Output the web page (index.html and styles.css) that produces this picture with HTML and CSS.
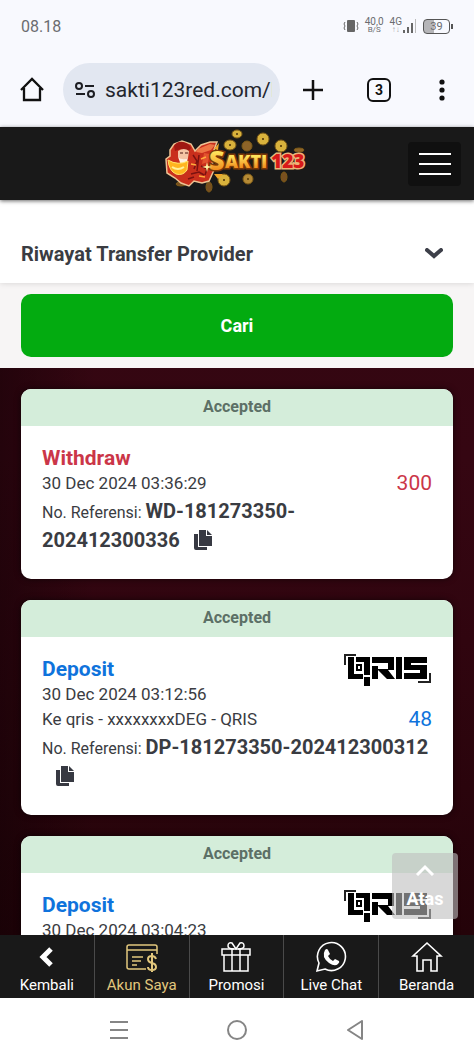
FILE: index.html
```html
<!DOCTYPE html>
<html lang="id">

<head>
  <meta charset="UTF-8">
  <meta name="viewport" content="width=device-width, initial-scale=1.0">
  <title>Riwayat Transfer Provider</title>
  <link rel="stylesheet" href="styles.css">
</head>

<body>
  <svg class="sprite" aria-hidden="true">
    <symbol id="copy" viewBox="0 0 18 20">
      <path d="M5 0h7v6h6v10H5z" />
      <path d="M13 0l5 5h-5z" />
      <path d="M0 4h4v13h9v3H2q-2 0-2-2z" />
    </symbol>
    <symbol id="qris" viewBox="0 0 88 34">
      <path d="M1 12V2h11M86 20v9H74" fill="none" stroke="#222" stroke-width="2" />
      <path d="M4 4h6v17h9v5H4zM12 4h14v18h-6V9h-8zM20 24h6v9h-6zM12 11h6v7h-6zM14 13v3h2v-3z" fill-rule="evenodd" />
      <path d="M28 4h22v13h-6l7 9h-8l-10-10h11V10H28zM28 13h6v13h-6zM52 4h6v22h-6zM60 4h23v6H67v2h16v14H60v-6h16v-3H60z" />
    </symbol>
  </svg>

  <header class="browser">
    <div class="status">
      <span class="clock">08.18</span>
      <div class="status-icons">
        <svg width="16" height="14" viewBox="0 0 16 14">
          <rect x="4" y="1" width="8" height="12" rx="1" fill="#666" />
          <path d="M2 3l-1 2 1 2-1 2 1 2M14 3l1 2-1 2 1 2-1 2" fill="none" stroke="#666" />
        </svg>
        <span class="speed">40,0<small>B/S</small></span>
        <span class="network">4G<small>↑↓</small></span>
        <svg class="signal" width="15" height="14" viewBox="0 0 15 14" fill="#666">
          <path d="M1 11h2v3H1zM5 8h2v6H5zM9 4h2v10H9z" />
          <path d="M13 0h1v14h-1z" fill="#bbb" />
        </svg>
        <span class="battery">39</span>
      </div>
    </div>
    <div class="toolbar">
      <button class="tool home" aria-label="Home">
        <svg width="26" height="26" viewBox="0 0 26 26" fill="none" stroke="#111" stroke-width="2.300">
          <path d="M2 13L13 2l11 11M5 11v12h16V11" />
        </svg>
      </button>
      <div class="address">
        <svg width="22" height="18" viewBox="0 0 22 18" fill="none" stroke="#1c1d22" stroke-width="2">
          <circle cx="5" cy="5" r="3" />
          <circle cx="17" cy="13" r="3" />
          <path d="M11 5h9M2 13h9" />
        </svg>
        <input type="text" value="sakti123red.com/l" aria-label="Address">
      </div>
      <button class="tool" aria-label="New tab">
        <svg width="22" height="22" viewBox="0 0 22 22" stroke="#111" stroke-width="2.500">
          <path d="M11 1v20M1 11h20" />
        </svg>
      </button>
      <button class="tool"><span class="tabs">3</span></button>
      <button class="tool more" aria-label="Menu">
        <svg width="6" height="22" viewBox="0 0 6 22" fill="#111">
          <circle cx="3" cy="3" r="2.600" />
          <circle cx="3" cy="11" r="2.600" />
          <circle cx="3" cy="19" r="2.600" />
        </svg>
      </button>
    </div>
  </header>

  <nav class="navbar">
    <a href="#" class="brand" aria-label="Sakti123">
      <svg width="142" height="64" viewBox="0 4 142 64">
        <defs>
          <linearGradient id="gold" x1="0" y1="0" x2="0" y2="1">
            <stop offset=".3" stop-color="#ffe45c" />
            <stop offset=".8" stop-color="#f08a1c" />
          </linearGradient>
        </defs>
        <g fill="#d9b23c" stroke="#7c5a17">
          <ellipse cx="71" cy="6" rx="5" ry="4" />
          <ellipse cx="97" cy="11" rx="6" ry="6" />
          <ellipse cx="64" cy="17" rx="6" ry="5" />
          <ellipse cx="81" cy="18" rx="5" ry="5" fill="#8e6428" />
          <ellipse cx="115" cy="18" rx="6" ry="6" />
          <ellipse cx="133" cy="22" rx="5" ry="2" fill="#8e6428" />
          <ellipse cx="58" cy="52" rx="6" ry="6" />
          <ellipse cx="82" cy="51" rx="5" ry="5" fill="#b58a35" />
          <ellipse cx="118" cy="49" rx="3" ry="5" fill="#795020" />
          <ellipse cx="15" cy="56" rx="5" ry="2" fill="#795020" />
          <ellipse cx="43" cy="59" rx="3" ry="5" fill="#795020" />
        </g>
        <path d="M70 5h2v2h-2zM96 10h2v2h-2zM63 16h2v2h-2zM114 17h2v2h-2zM57 51h2v2h-2zM81 50h2v2h-2z" fill="#6d4f13" />
        <path d="M4 22l4-6 8-3 9 3 4 7 6-6 9-3h7l-3 8 3 6-5 5 2 9-5 11-7 2-8-2-5 5-8-3-6-5-8-5-1-14 4-3z" fill="#c92f1c" stroke="#edc393" stroke-width="1.500" />
        <path d="M8 18q3-5 9-4 6 1 8 6l-3 4-7-3-6 2z" fill="#a01812" />
        <path d="M12 23q6-4 11 0l-1 7-5 3-5-4z" fill="#f5c5a4" />
        <path d="M12 29q5 4 10 1l-2 6-5 1z" fill="#fff0e0" />
        <path d="M14 25h3M19 25h3" stroke="#4a1712" />
        <path d="M32 21l12-5 5 1-4 5-9 3-6-1z" fill="#ee7544" />
        <path d="M38 25l6 1-2 8-6 2z" fill="#e3532f" />
        <path d="M2 32q10 6 20 1l-1 9q-4 6-11 4Q3 43 2 32z" fill="#ffb51f" stroke="#ffe36a" />
        <path d="M6 39q6 4 12 0" stroke="#fff19a" fill="none" stroke-width="2" />
        <path d="M27 27l4 6-3 8M33 27l-2 16M25 46l8-2 5 3M35 38l6 3-2 6M22 51l6-2" fill="none" stroke="#7a1210" stroke-width="1.500" />
        <path d="M25 36l5 1M33 48l6 1M35 31l5-2" stroke="#ffab3c" stroke-width="1.500" />
        <g class="brand-text">
          <text x="43" y="42" fill="url(#gold)" stroke="#7a3808" font-size="27">S</text>
          <text x="59" y="40" fill="url(#gold)" stroke="#7a3808" font-size="18">AKTI</text>
          <text x="105" y="40" fill="#d81919" stroke="#edb477" font-size="19">123</text>
        </g>
        <path d="M48 21l5-6-1 7zM48 46l4 5 5-5z" fill="#efa529" />
        <path d="M42 38l-1-4-1 4-4 1 4 1 1 4 1-4 4-1z" fill="#fff2a0" />
      </svg>
    </a>
    <button class="hamburger" aria-label="Menu"><span></span><span></span><span></span></button>
  </nav>

  <main class="content">
    <button class="filter-title">
      Riwayat Transfer Provider
      <svg width="18" height="12" viewBox="0 0 18 12" fill="none" stroke="#3d3f49" stroke-width="4">
        <path d="M2 2l7 6 7-6" stroke-linecap="round" />
      </svg>
    </button>
    <div class="filter-action">
      <button class="search">Cari</button>
    </div>

    <section class="history">
      <article class="card">
        <h2 class="card-status">Accepted</h2>
        <div class="card-body">
          <div class="summary">
            <div>
              <h3 class="withdraw">Withdraw</h3>
              <p>30 Dec 2024 03:36:29</p>
            </div>
            <div class="side">
              <span class="amount withdraw">300</span>
            </div>
          </div>
          <p class="reference">No. Referensi: <strong>WD-181273350-202412300336</strong><button class="copy" aria-label="Salin"><svg width="18" height="20"><use href="#copy" /></svg></button></p>
        </div>
      </article>

      <article class="card">
        <h2 class="card-status">Accepted</h2>
        <div class="card-body">
          <div class="summary">
            <div>
              <h3 class="deposit">Deposit</h3>
              <p>30 Dec 2024 03:12:56</p>
              <p>Ke qris - xxxxxxxxDEG - QRIS</p>
            </div>
            <div class="side">
              <svg class="qris" width="88" height="34" role="img" aria-label="QRIS"><use href="#qris" /></svg>
              <span class="amount deposit">48</span>
            </div>
          </div>
          <p class="reference">No. Referensi: <strong>DP-181273350-202412300312</strong><button class="copy" aria-label="Salin"><svg width="18" height="20"><use href="#copy" /></svg></button></p>
        </div>
      </article>

      <article class="card">
        <h2 class="card-status">Accepted</h2>
        <div class="card-body">
          <div class="summary">
            <div>
              <h3 class="deposit">Deposit</h3>
              <p>30 Dec 2024 03:04:23</p>
            </div>
            <div class="side">
              <svg class="qris" width="88" height="34" role="img" aria-label="QRIS"><use href="#qris" /></svg>
            </div>
          </div>
        </div>
      </article>
    </section>

    <button class="to-top">
      <svg width="20" height="12" viewBox="0 0 20 12" fill="none" stroke="#fff" stroke-width="3">
        <path d="M2 11l8-8 8 8" />
      </svg>
      Atas
    </button>
  </main>

  <nav class="bottom-nav">
    <a href="#">
      <svg width="32" height="32" viewBox="0 0 32 32" fill="none" stroke="#fff" stroke-width="5">
        <path d="M20 8l-8 8 8 8" />
      </svg>
      Kembali
    </a>
    <a href="#" class="active">
      <svg width="32" height="32" viewBox="0 0 32 32" fill="none" stroke="#e2c77d" stroke-width="1.500">
        <path d="M20 28H3q-2 0-2-2V6q0-2 2-2h26q2 0 2 2v7M1 9h30M6 16h11M6 20h9M6 24h5" />
        <path d="M30 18q-1-3-4-3-4 0-4 3t4 4q4 1 4 4t-4 3-4-3M26 12v19" stroke-width="2" />
      </svg>
      Akun Saya
    </a>
    <a href="#">
      <svg width="32" height="32" viewBox="0 0 32 32" fill="none" stroke="#fff" stroke-width="1.500">
        <path d="M2 8h28v6H2zM4 14v16h24V14M12 8v22M20 8v22" />
        <path d="M14 8Q8 8 8 5q0-4 4-3l4 6 4-6q4-1 4 3 0 3-6 3" />
      </svg>
      Promosi
    </a>
    <a href="#">
      <svg width="32" height="32" viewBox="0 0 32 32">
        <path d="M2 30l2-8A14 14 0 1 1 10 28z" fill="none" stroke="#fff" stroke-width="1.600" />
        <path d="M10 9q2-2 3 0l2 4-2 2q2 4 5 5l2-2 4 2q1 1-1 3-3 3-9-1-8-6-4-13z" fill="#fff" />
      </svg>
      Live Chat
    </a>
    <a href="#">
      <svg width="32" height="32" viewBox="0 0 32 32" fill="none" stroke="#fff" stroke-width="1.600">
        <path d="M6 15H2L16 2l14 13h-4v15h-6V19h-8v11H6z" />
      </svg>
      Beranda
    </a>
  </nav>

  <footer class="system-nav">
    <button aria-label="Recent">
      <svg width="20" height="20" viewBox="0 0 20 20" stroke="#858585" stroke-width="2">
        <path d="M1 2h18M1 10h18M1 18h18" />
      </svg>
    </button>
    <button aria-label="Home">
      <svg width="20" height="20" viewBox="0 0 20 20" fill="none" stroke="#858585" stroke-width="2">
        <circle cx="10" cy="10" r="9" />
      </svg>
    </button>
    <button aria-label="Back">
      <svg width="20" height="20" viewBox="0 0 20 20" fill="none" stroke="#858585" stroke-width="2" stroke-linejoin="round">
        <path d="M17 1v18L3 10z" />
      </svg>
    </button>
  </footer>
</body>

</html>
```
FILE: styles.css
```css
* {
  box-sizing: border-box;
}

body {
  margin: 0;
  height: 100vh;
  display: flex;
  flex-direction: column;
  overflow: hidden;
  font-family: Roboto, sans-serif;
  font-size: 16px;
  line-height: 25px;
  color: #3a3c42;
  background: #fff;
}

h2, h3, p {
  margin: 0;
}

button {
  border: none;
  padding: 0;
  background: none;
  font-family: inherit;
  color: inherit;
  cursor: pointer;
}

a {
  color: inherit;
  text-decoration: none;
}

svg {
  display: block;
}

.sprite {
  position: absolute;
  width: 0;
  height: 0;
}

/* browser bar */
.browser {
  flex: none;
  background: #f8f9fe;
}

.status {
  display: flex;
  justify-content: space-between;
  align-items: center;
  height: 52px;
  padding: 0 24px 0 21px;
  color: #6b6c70;
}

.status-icons {
  display: flex;
  align-items: center;
  gap: 6px;
  font-size: 10px;
  line-height: 8px;
}

.status-icons small {
  display: block;
  font-size: 8px;
}

.speed, .network {
  text-align: center;
}

.network small {
  color: #aaa;
}

.signal {
  margin-left: -6px;
}

.battery {
  position: relative;
  width: 27px;
  border: 1px solid #555;
  border-radius: 4px;
  font-size: 11px;
  line-height: 13px;
  text-align: center;
  background: linear-gradient(to right, #b5b5b8 39%, transparent 39%);
}

.battery::after {
  content: "";
  position: absolute;
  right: -4px;
  top: 4px;
  width: 2px;
  height: 5px;
  background: #555;
}

.toolbar {
  display: flex;
  align-items: center;
  height: 75px;
  padding: 0 16px 0 0;
}

.tool {
  flex: 0 0 66px;
  display: flex;
  justify-content: center;
}

.home {
  flex-basis: 63px;
}

.more {
  flex-basis: 32px;
  margin-left: 14px;
}

.address {
  flex: 1;
  min-width: 0;
  display: flex;
  align-items: center;
  gap: 9px;
  height: 53px;
  padding: 0 8px 0 11px;
  border-radius: 27px;
  background: #e2e7f1;
}

.address svg {
  flex: none;
}

.address input {
  flex: 1;
  min-width: 0;
  border: none;
  padding: 0;
  background: none;
  font-family: inherit;
  font-size: 21px;
  color: #24262e;
}

.tabs {
  width: 24px;
  border: 2px solid #111;
  border-radius: 6px;
  font-size: 14px;
  font-weight: bold;
  line-height: 20px;
  color: #111;
}

/* site header */
.navbar {
  position: relative;
  z-index: 1;
  flex: none;
  display: grid;
  grid-template-columns: 1fr auto 1fr;
  align-items: center;
  height: 73px;
  padding: 0 13px;
  background: #191919;
  box-shadow: 0 1px 4px rgba(0, 0, 0, 0.6);
}

.brand {
  grid-column: 2;
}

.brand svg {
  overflow: visible;
}

.brand-text {
  font-family: "Open Sans", sans-serif;
  font-weight: 800;
  paint-order: stroke;
  stroke-width: 3px;
}

.hamburger {
  justify-self: end;
  display: flex;
  flex-direction: column;
  justify-content: center;
  align-items: center;
  gap: 8px;
  width: 53px;
  height: 44px;
  border-radius: 4px;
  background: #101010;
}

.hamburger span {
  width: 32px;
  height: 2px;
  background: #fff;
}

/* page content */
.content {
  position: relative;
  flex: 1;
  min-height: 0;
  overflow: hidden;
  background: linear-gradient(to right, rgba(10, 0, 3, 0.4), transparent 20%), linear-gradient(#330610, #350612 35%, #30050f 60%, #240309);
}

.filter-title {
  position: relative;
  display: flex;
  justify-content: space-between;
  align-items: center;
  width: 100%;
  padding: 42px 31px 17px 21px;
  background: #fff;
  box-shadow: 0 0 6px rgba(0, 0, 0, 0.15);
  font-size: 20px;
  font-weight: bold;
  line-height: 24px;
}

.filter-action {
  padding: 11px 21px;
  background: #f7f5f5;
}

.search {
  display: block;
  width: 100%;
  height: 63px;
  border-radius: 10px;
  background: #03ab10;
  font-size: 18px;
  font-weight: bold;
  color: #fff;
}

.history {
  display: flex;
  flex-direction: column;
  gap: 21px;
  padding: 21px;
}

.card {
  flex: none;
  border-radius: 10px;
  overflow: hidden;
  background: #fff;
  box-shadow: 0 0 6px rgba(0, 0, 0, 0.6);
}

.card-status {
  padding: 5px 0 7px;
  background: #d4edda;
  font-size: 16px;
  font-weight: bold;
  text-align: center;
  color: #5c7066;
}

.card-body {
  padding: 20px 21px 23px;
}

.summary {
  display: flex;
  justify-content: space-between;
  font-size: 17px;
}

.summary h3 {
  font-size: 21px;
  font-weight: bold;
}

.side {
  display: flex;
  flex-direction: column;
  align-items: flex-end;
}

.qris {
  margin-top: -4px;
}

.amount {
  margin-top: auto;
  font-size: 21px;
}

.withdraw {
  color: #cb3648;
}

.deposit {
  color: #0f73dc;
}

.reference {
  padding-top: 2px;
  line-height: 29px;
}

.reference strong {
  font-size: 20px;
  line-height: 20px;
}

.copy {
  margin-left: 14px;
  line-height: 20px;
  vertical-align: -3px;
}

.copy svg {
  fill: #373942;
}

.to-top {
  position: absolute;
  right: 16px;
  bottom: 16px;
  display: flex;
  flex-direction: column;
  align-items: center;
  gap: 10px;
  width: 66px;
  height: 66px;
  padding-top: 11px;
  border-radius: 4px;
  background: rgba(190, 190, 190, 0.6);
  font-size: 18px;
  font-weight: bold;
  line-height: 25px;
  color: #fff;
}

/* site menu */
.bottom-nav {
  flex: none;
  display: grid;
  grid-template-columns: repeat(5, 1fr);
  background: #191919;
  color: #fff;
  font-size: 15px;
  line-height: 20px;
}

.bottom-nav a {
  display: flex;
  flex-direction: column;
  align-items: center;
  gap: 2px;
  padding: 6px 0 3px;
  border-right: 1px solid #4a4a4a;
}

.bottom-nav a:last-child {
  border-right: none;
}

.bottom-nav .active {
  color: #e2c77d;
}

/* phone buttons */
.system-nav {
  flex: none;
  display: flex;
  justify-content: center;
  align-items: center;
  gap: 98px;
  height: 63px;
  background: #fff;
}
```
